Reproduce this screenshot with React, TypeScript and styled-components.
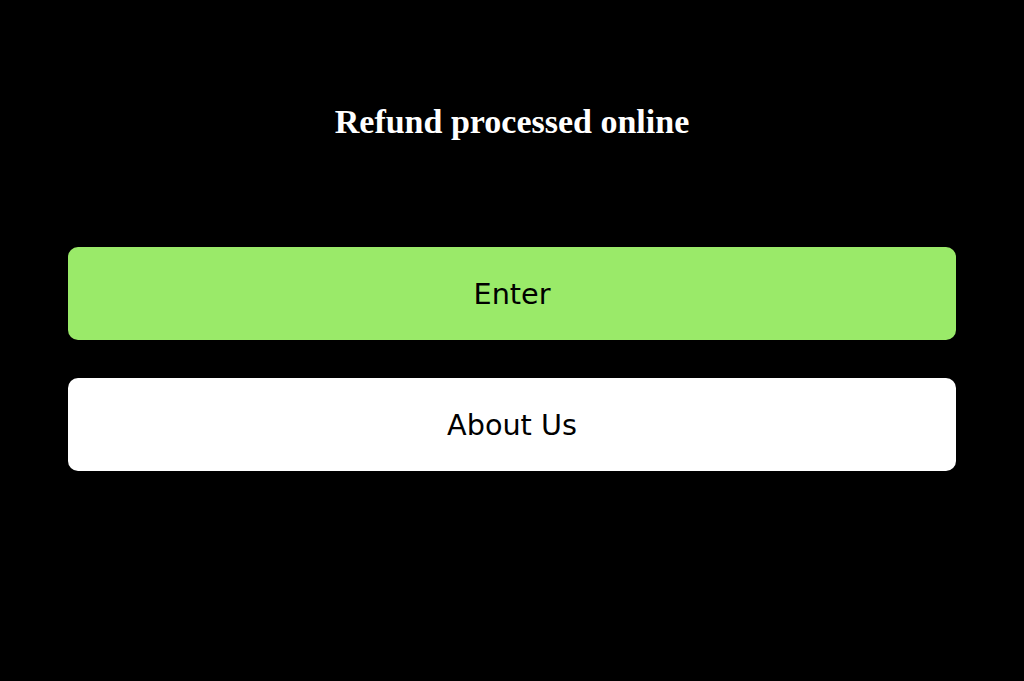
import styled, { createGlobalStyle } from "styled-components";

const Global = createGlobalStyle`
  html, body {
    margin: 0;
    padding: 0;
    background: #000;
  }
`;

const Page = styled.div`
  min-height: 681px;
  background: #000;
  padding: 0 68px;
  box-sizing: border-box;
  display: flex;
  flex-direction: column;
`;

const Title = styled.h1`
  margin: 101px 0 0;
  color: #fff;
  text-align: center;
  font-family: "Liberation Serif", serif;
  font-weight: bold;
  font-size: 34px;
  line-height: 42px;
`;

const Actions = styled.div`
  margin-top: 104px;
  display: flex;
  flex-direction: column;
  gap: 38px;
`;

const Button = styled.button<{ $primary?: boolean }>`
  height: 93px;
  width: 100%;
  border: none;
  border-radius: 10px;
  background: ${(p) => (p.$primary ? "#9aea69" : "#fff")};
  color: #000;
  font-family: "DejaVu Sans", sans-serif;
  font-size: 28.7px;
  padding-top: 2px;
  cursor: pointer;
`;

export default function App() {
  return (
    <>
      <Global />
      <Page>
        <Title>Refund processed online</Title>
        <Actions>
          <Button $primary>Enter</Button>
          <Button>About Us</Button>
        </Actions>
      </Page>
    </>
  );
}
